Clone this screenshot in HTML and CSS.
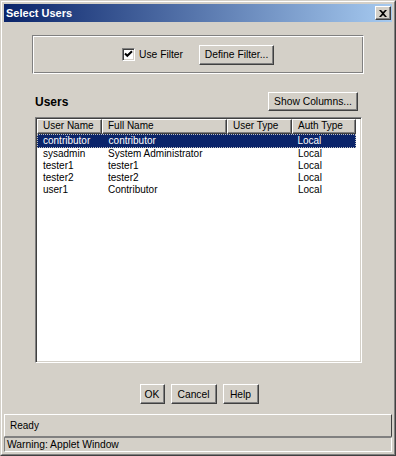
FILE: index.html
```html
<!DOCTYPE html>
<html lang="en">
<head>
  <meta charset="UTF-8">
  <title>Select Users</title>
  <link rel="stylesheet" href="styles.css">
</head>
<body>
  <div class="window">
    <div class="frame">
      <div class="titlebar">
        <span class="title">Select Users</span>
        <button class="close" title="Close">
          <svg width="8" height="7" viewBox="0 0 8 7"><path d="M0 0h2l2 2 2-2h2L5 3.5 8 7H6L4 5 2 7H0l3-3.5z" fill="#000"/></svg>
        </button>
      </div>

      <div class="content">
        <div class="filter-box">
          <label class="check">
            <span class="checkbox">
              <svg width="9" height="9" viewBox="0 0 9 9"><path d="M1 3.5l2.3 2.3L8 1.2" fill="none" stroke="#000" stroke-width="2"/></svg>
            </span>
            Use Filter
          </label>
          <button class="btn define-btn">Define Filter...</button>
        </div>

        <div class="users-head">
          <span class="users-title">Users</span>
          <button class="btn columns-btn">Show Columns...</button>
        </div>

        <div class="table">
          <div class="thead">
            <div class="th col-user">User Name</div>
            <div class="th col-full">Full Name</div>
            <div class="th col-type">User Type</div>
            <div class="th col-auth">Auth Type</div>
          </div>
          <div class="tbody">
            <div class="row selected">
              <div class="td col-user">contributor</div>
              <div class="td col-full">contributor</div>
              <div class="td col-type"></div>
              <div class="td col-auth">Local</div>
            </div>
            <div class="row">
              <div class="td col-user">sysadmin</div>
              <div class="td col-full">System Administrator</div>
              <div class="td col-type"></div>
              <div class="td col-auth">Local</div>
            </div>
            <div class="row">
              <div class="td col-user">tester1</div>
              <div class="td col-full">tester1</div>
              <div class="td col-type"></div>
              <div class="td col-auth">Local</div>
            </div>
            <div class="row">
              <div class="td col-user">tester2</div>
              <div class="td col-full">tester2</div>
              <div class="td col-type"></div>
              <div class="td col-auth">Local</div>
            </div>
            <div class="row">
              <div class="td col-user">user1</div>
              <div class="td col-full">Contributor</div>
              <div class="td col-type"></div>
              <div class="td col-auth">Local</div>
            </div>
          </div>
        </div>

        <div class="actions">
          <button class="btn ok-btn">OK</button>
          <button class="btn cancel-btn">Cancel</button>
          <button class="btn help-btn">Help</button>
        </div>
      </div>

      <div class="status">Ready</div>
      <div class="warning">Warning: Applet Window</div>
    </div>
  </div>
</body>
</html>
```

FILE: styles.css
```css
* {
  margin: 0;
  padding: 0;
  box-sizing: border-box;
}

body {
  background: #d4d0c8;
  font-family: 'Liberation Sans', Arial, sans-serif;
  font-size: 10px;
  color: #000;
}

.window {
  width: 396px;
  height: 456px;
  border: 1px solid;
  border-color: #d4d0c8 #404040 #404040 #d4d0c8;
  background: #d4d0c8;
}

.frame {
  height: 100%;
  border: 1px solid;
  border-color: #fff #808080 #808080 #fff;
  padding: 2px;
  display: flex;
  flex-direction: column;
}

.titlebar {
  height: 18px;
  display: flex;
  align-items: center;
  justify-content: space-between;
  padding: 0 1px 0 2px;
  background: linear-gradient(to right, #0a246a, #a6caf0);
}

.title {
  color: #fff;
  font-weight: bold;
  font-size: 11px;
}

.close {
  width: 16px;
  height: 14px;
  display: flex;
  align-items: center;
  justify-content: center;
  background: #d4d0c8;
  border: 1px solid;
  border-color: #fff #404040 #404040 #fff;
  box-shadow: inset -1px -1px #808080;
}

.content {
  flex: 1;
  display: flex;
  flex-direction: column;
}

/* buttons */
.btn {
  height: 20px;
  font-family: inherit;
  font-size: 10.3px;
  white-space: nowrap;
  color: #000;
  background: #d4d0c8;
  border: 1px solid;
  border-color: #fff #404040 #404040 #fff;
  box-shadow: inset -1px -1px #808080;
}

/* filter group */
.filter-box {
  margin: 13px 28px 0;
  height: 39px;
  display: flex;
  align-items: center;
  justify-content: center;
  gap: 16px;
  border: 1px solid;
  border-color: #808080 #fff #fff #808080;
  box-shadow: inset 1px 1px #fff, inset -1px -1px #808080;
}

.check {
  display: flex;
  align-items: center;
  gap: 4px;
  font-size: 10.3px;
}

.checkbox {
  width: 13px;
  height: 13px;
  display: flex;
  align-items: center;
  justify-content: center;
  background: #fff;
  border: 1px solid;
  border-color: #808080 #fff #fff #808080;
  box-shadow: inset 1px 1px #404040, inset -1px -1px #d4d0c8;
}

.define-btn {
  width: 75px;
}

/* users header */
.users-head {
  margin: 18px 34px 0 31px;
  height: 19px;
  display: flex;
  align-items: center;
  justify-content: space-between;
}

.users-title {
  font-weight: bold;
  font-size: 12px;
}

.columns-btn {
  width: 90px;
  height: 19px;
}

/* table */
.table {
  margin: 6px 30px 0 31px;
  height: 246px;
  background: #fff;
  border: 1px solid;
  border-color: #808080 #fff #fff #808080;
  box-shadow: inset 1px 1px #404040, inset -1px -1px #d4d0c8;
  padding: 1px;
}

.thead {
  display: flex;
  height: 15px;
}

.th {
  background: #d4d0c8;
  border: 1px solid;
  border-color: #fff #404040 #404040 #fff;
  box-shadow: inset -1px -1px #808080;
  padding-left: 5px;
  line-height: 12px;
  white-space: nowrap;
}

.col-user { width: 65px; }
.col-full { width: 125px; }
.col-type { width: 65px; }
.col-auth { width: 64px; }

.row {
  display: flex;
  height: 12px;
  line-height: 12px;
  width: 319px;
}

.row.selected {
  height: 14px;
  line-height: 12px;
  background: #0a246a;
  color: #fff;
  border: 1px dotted #c0c0c0;
}

.td {
  padding-left: 6px;
  white-space: nowrap;
}

.row.selected .td:first-child {
  padding-left: 5px;
}

/* dialog buttons */
.actions {
  margin-top: 21px;
  display: flex;
  justify-content: center;
  gap: 6px;
  padding-left: 2px;
}

.ok-btn { width: 25px; }
.cancel-btn { width: 46px; }
.help-btn { width: 36px; }

/* status */
.status {
  margin-top: 10px;
  height: 23px;
  line-height: 21px;
  padding-left: 5px;
  border: 1px solid;
  border-color: #fff #404040 #808080 #fff;
}

.warning {
  height: 15px;
  line-height: 13px;
  padding-left: 2px;
  border: 1px solid;
  border-color: #808080 #fff #fff #808080;
  font-size: 10.3px;
}
```
